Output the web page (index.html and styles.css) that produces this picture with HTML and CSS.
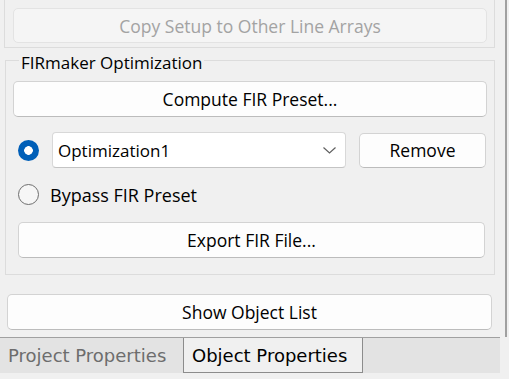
FILE: index.html
```html
<!DOCTYPE html>
<html>
<head>
	<title>Object Properties</title>
	<link rel="stylesheet" href="styles.css">
</head>
<body>
	<div class="panel">
		<div class="group-top">
			<div class="btn disabled copy">Copy Setup to Other Line Arrays</div>
		</div>

		<fieldset class="group">
			<legend>FIRmaker Optimization</legend>
			<div class="btn compute">Compute FIR Preset...</div>

			<div class="row row-select">
				<span class="radio on"></span>
				<div class="select">
					<span>Optimization1</span>
					<svg width="13" height="7" viewBox="0 0 13 7"><path d="M0.5 0.5 L6.5 6 L12.5 0.5" fill="none" stroke="#606060" stroke-width="1.2"/></svg>
				</div>
				<div class="btn remove">Remove</div>
			</div>

			<div class="row row-bypass">
				<span class="radio off"></span>
				<span class="radio-label">Bypass FIR Preset</span>
			</div>

			<div class="btn export">Export FIR File...</div>
		</fieldset>

		<div class="btn show">Show Object List</div>
	</div>

	<div class="tabs">
		<div class="tab inactive">Project Properties</div>
		<div class="tab active">Object Properties</div>
	</div>
</body>
</html>
```

FILE: styles.css
```css
body {
	margin: 0;
	width: 509px;
	height: 379px;
	overflow: hidden;
	background-color: #f0f0f0;
	font-family: "Segoe UI", "Open Sans", sans-serif;
	font-size: 17px;
	color: #000;
}

.panel {
	width: 505px;
	height: 337px;
	border-right: 2px solid #a0a0a0;
}

.group-top {
	margin-left: 4px;
	width: 491px;
	height: 48px;
	box-sizing: border-box;
	border: 1px solid #dcdcdc;
	border-top: none;
	padding: 8px 0 0 8px;
}

.btn {
	display: flex;
	align-items: center;
	justify-content: center;
	box-sizing: border-box;
	background-color: #fdfdfd;
	border: 1px solid #d3d3d3;
	border-bottom-color: #bcbcbc;
	border-radius: 5px;
	font-size: 17.5px;
}

.btn.disabled {
	background-color: #f5f5f5;
	border-color: #e3e3e3;
	color: #a3a3a3;
}

.copy {
	width: 474px;
	height: 35px;
}

.group {
	margin: 0 0 0 5px;
	padding: 0 0 16px 0;
	width: 490px;
	min-width: 0;
	box-sizing: border-box;
	border: 1px solid #dcdcdc;
}

.group legend {
	margin-left: 13px;
	padding: 6px 2px 0;
	line-height: 18px;
}

.compute {
	width: 474px;
	height: 36px;
	margin: 9px 0 0 7px;
}

.row {
	display: flex;
	align-items: center;
	margin-left: 12px;
}

.row-select {
	margin-top: 15px;
	height: 36px;
}

.row-bypass {
	margin-top: 15px;
	height: 23px;
}

.radio {
	width: 21px;
	height: 21px;
	flex: none;
	border-radius: 50%;
	box-sizing: border-box;
}

.radio.on {
	background: radial-gradient(circle, #fff 0 4px, #005fb8 4.6px);
}

.radio.off {
	border: 1px solid #6e6e6e;
	background-color: #f6f6f6;
}

.radio-label {
	margin-left: 11px;
	font-size: 18px;
}

.select {
	display: flex;
	align-items: center;
	justify-content: space-between;
	margin-left: 13px;
	width: 294px;
	height: 36px;
	box-sizing: border-box;
	padding: 0 9px 0 5px;
	background-color: #fff;
	border: 1px solid #d8d8d8;
	border-bottom-color: #c4c4c4;
	border-radius: 4px;
}

.remove {
	margin-left: 13px;
	width: 127px;
	height: 35px;
}

.export {
	width: 467px;
	height: 36px;
	margin: 16px 0 0 12px;
}

.show {
	width: 485px;
	height: 36px;
	margin: 19px 0 0 7px;
}

.tabs {
	display: flex;
	width: 500px;
	height: 36px;
	box-sizing: border-box;
	background-color: #e3e3e3;
	border-top: 1px solid #a0a0a0;
	font-family: "DejaVu Sans", sans-serif;
	font-size: 18px;
}

.tab {
	display: flex;
	align-items: center;
	box-sizing: border-box;
	padding-left: 8px;
	border-right: 1px solid #8c8c8c;
}

.tab.inactive {
	width: 184px;
	color: #6d6d6d;
}

.tab.active {
	width: 179px;
	background-color: #f0f0f0;
	border-bottom: 1px solid #8c8c8c;
}
```
